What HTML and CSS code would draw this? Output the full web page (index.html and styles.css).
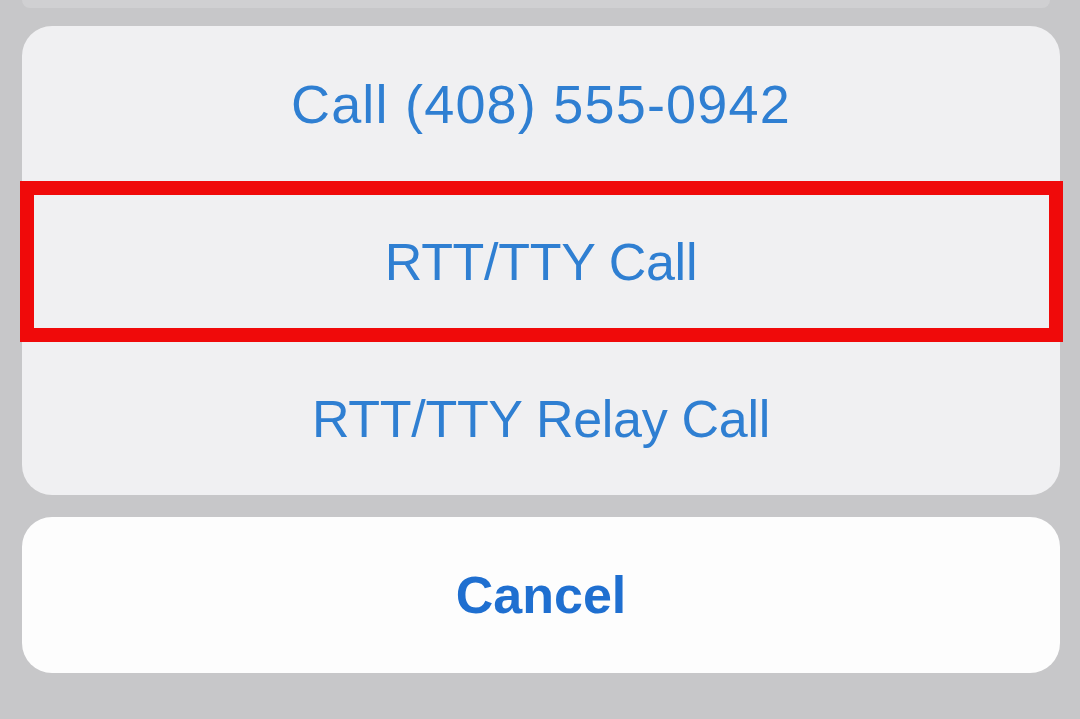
FILE: index.html
```html
<!DOCTYPE html>
<html>
<head>
<meta charset="utf-8">
<link rel="stylesheet" href="styles.css">
</head>
<body>
<div class="sheet">
  <div class="prev-edge"></div>
  <div class="group">
    <div class="row row-first"><span class="label label-phone">Call (408) 555-0942</span></div>
    <div class="row row-mid highlighted"><span class="label">RTT/TTY Call</span></div>
    <div class="row row-last"><span class="label">RTT/TTY Relay Call</span></div>
  </div>
  <div class="cancel"><span class="cancel-label">Cancel</span></div>
</div>
</body>
</html>
```
FILE: styles.css
```css
html, body {
  margin: 0;
  padding: 0;
}
body {
  width: 1080px;
  height: 719px;
  overflow: hidden;
  background: #c7c7c9;
  font-family: "Liberation Sans", Arial, sans-serif;
}
.sheet {
  display: flex;
  flex-direction: column;
}
.prev-edge {
  height: 8px;
  margin: 0 30px 0 22px;
  background: #d0d0d2;
  border-radius: 0 0 18px 18px;
}
.group {
  margin: 18px 20px 0 22px;
  background: #f0f0f2;
  border-radius: 30px;
  display: flex;
  flex-direction: column;
}
.row {
  display: flex;
  align-items: center;
  justify-content: center;
}
.row-first { height: 155px; }
.row-mid { height: 161px; }
.row-last { height: 153px; }
.highlighted {
  position: relative;
}
.highlighted::after {
  content: "";
  position: absolute;
  top: 0;
  bottom: 0;
  left: -2px;
  right: -3px;
  border: 14px solid #f00a0a;
  pointer-events: none;
}
.label {
  color: #2f7fd2;
  font-size: 52px;
  font-weight: 400;
  letter-spacing: -0.3px;
}
.label-phone {
  font-size: 54px;
  letter-spacing: 1.2px;
}
.cancel {
  margin: 22px 20px 0 22px;
  height: 156px;
  background: #fdfdfd;
  border-radius: 30px;
  display: flex;
  align-items: center;
  justify-content: center;
}
.cancel-label {
  color: #1f6fd0;
  font-size: 52px;
  font-weight: 700;
}
```
